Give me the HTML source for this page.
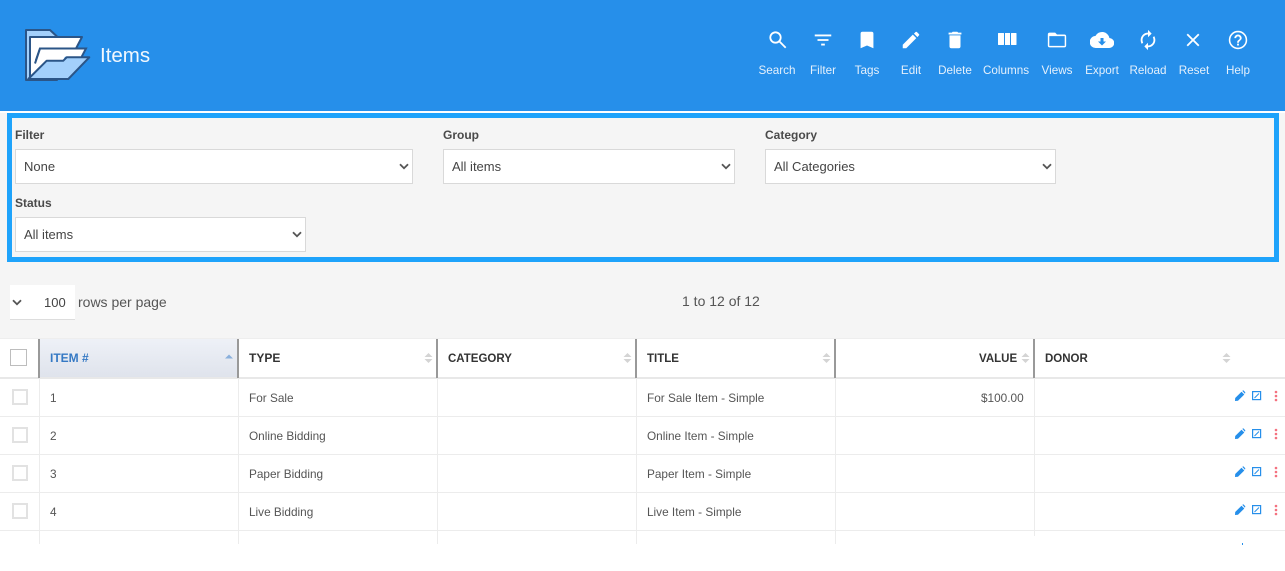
<!DOCTYPE html>
<html><head><meta charset="utf-8">
<style>
html,body{margin:0;padding:0;background:#fff}
#p{position:relative;width:1285px;height:571px;overflow:hidden;background:#fff;font-family:"Liberation Sans",sans-serif;color:#444}
#p div,#p svg{position:absolute}
.t{white-space:nowrap}
.nav{color:#e4f0fc;font-size:11.7px;top:63px;width:60px;text-align:center;line-height:16px}
.lb{font-size:12px;font-weight:bold;color:#4a4a4a;line-height:16px;white-space:nowrap}
.sel{background:#fff;border:1px solid #d9d9d9;box-sizing:border-box;height:35px;font-size:13px;line-height:33px;padding-left:8px;color:#444}
.th{top:351px;font-size:11.5px;font-weight:bold;color:#333;line-height:16px;white-space:nowrap}
.td{font-size:11.8px;color:#555;line-height:16px;white-space:nowrap}
.hl{left:0;width:1285px;height:1px;background:#ececec}
.vl{width:1px;background:#ececec;top:378px;height:166px}
.hd{width:2px;background:#999;top:339px;height:39px}
.cb{left:12px;width:12px;height:12px;border:2px solid #e2e2e2;background:#fff}
</style></head><body><div id="p">
<div style="left:0;top:0;width:1285px;height:111px;background:#268fea"></div>
<div style="left:0;top:113px;width:1285px;height:225px;background:#f5f5f5"></div>

<svg style="left:24px;top:28px" width="68" height="54" viewBox="0 0 68 54">
<path d="M2 2H26L33 8.500V52H2Z" fill="#a3d0fb" stroke="#2b5587" stroke-width="2" stroke-linejoin="round"/>
<path d="M6 9H58L52 20.500H16L11 35L22.700 32.700L6 49Z" fill="#fff" stroke="#2b5587" stroke-width="2" stroke-linejoin="round"/>
<path d="M11 35.500L16 20.500H62L57.700 28.700H41L39 32.700H22.700L14 40L6 49V30H11Z" fill="#fff"/>
<path d="M11 35.500L16 20.500H62L57.700 28.700" fill="none" stroke="#2b5587" stroke-width="2"/>
<path d="M6 9V50" fill="none" stroke="#2b5587" stroke-width="2"/>
<path d="M4.300 51L22.700 32.700H39.300L42.700 29.300H65.300L44.300 51Z" fill="#a3d0fb" stroke="#2b5587" stroke-width="2" stroke-linejoin="round"/>
</svg>
<div class="t" style="left:100px;top:44px;font-size:20.500px;line-height:24px;color:#f2f8fe">Items</div>

<svg style="left:767px;top:29px" width="22" height="22" viewBox="0 0 22 22" fill="none" stroke="#fff" stroke-width="1.800"><circle cx="8.500" cy="8.500" r="5.200"/><path d="M12.500 12.500 18.700 18.700"/></svg>
<svg style="left:812px;top:29px" width="22" height="22" viewBox="0 0 24 24" fill="#fff"><path d="M10 18h4v-2h-4zM3 6v2h18V6zm3 7h12v-2H6z"/></svg>
<svg style="left:856px;top:29px" width="22" height="22" viewBox="0 0 24 24" fill="#fff"><path d="M17 3H7a2 2 0 0 0-2 2v16l7-3 7 3V5a2 2 0 0 0-2-2z"/></svg>
<svg style="left:900px;top:29px" width="22" height="22" viewBox="0 0 24 24" fill="#fff"><path d="M3 17.200V21h3.800L17.800 10 14 6.200zM20.700 7c.4-.4.4-1 0-1.400l-2.300-2.300a1 1 0 0 0-1.400 0l-1.800 1.800 3.800 3.800z"/></svg>
<svg style="left:944px;top:29px" width="22" height="22" viewBox="0 0 24 24" fill="#fff"><path d="M6 19a2 2 0 0 0 2 2h8a2 2 0 0 0 2-2V7H6zM19 4h-3.500l-1-1h-5l-1 1H5v2h14z"/></svg>
<svg style="left:996px;top:29px" width="22" height="22" viewBox="0 0 22 22" fill="#fff"><rect x="2" y="4" width="6" height="12" rx=".5"/><rect x="9" y="4" width="5" height="12"/><rect x="15" y="4" width="5.500" height="12" rx=".5"/></svg>
<svg style="left:1046px;top:29px" width="22" height="22" viewBox="0 0 24 24" fill="#fff" fill-rule="evenodd"><path d="M20 6h-8l-2-2H4a2 2 0 0 0-2 2v12a2 2 0 0 0 2 2h16a2 2 0 0 0 2-2V8a2 2 0 0 0-2-2zM20.400 18.400H3.600V7.800h16.800z"/></svg>
<svg style="left:1090px;top:28px" width="24" height="24" viewBox="0 0 24 24" fill="#fff"><path d="M19.400 10A7.500 7.500 0 0 0 5.400 8 6 6 0 0 0 6 20h13a5 5 0 0 0 .4-10zM16 13.500l-4 4-4-4h2.500V10h3v3.500z"/></svg>
<svg style="left:1137px;top:29px" width="22" height="22" viewBox="0 0 24 24" fill="#fff"><path d="M12 6v3l4-4-4-4v3c-4.420 0-8 3.580-8 8 0 1.570.46 3.030 1.240 4.260L6.700 14.800c-.45-.83-.7-1.790-.7-2.800 0-3.310 2.690-6 6-6zm6.760 1.740L17.300 9.200c.44.84.7 1.790.7 2.800 0 3.310-2.690 6-6 6v-3l-4 4 4 4v-3c4.420 0 8-3.580 8-8 0-1.570-.46-3.030-1.240-4.260z"/></svg>
<svg style="left:1182px;top:29px" width="22" height="22" viewBox="0 0 24 24" fill="#fff"><path d="M19 6.400 17.600 5 12 10.600 6.400 5 5 6.400 10.600 12 5 17.600 6.400 19 12 13.400 17.600 19 19 17.600 13.400 12z"/></svg>
<svg style="left:1227px;top:29px" width="22" height="22" viewBox="0 0 24 24" fill="#fff"><circle cx="12" cy="12" r="9.200" fill="none" stroke="#fff" stroke-width="1.700"/><path d="M11 18h2v-2h-2zm1-12c-2.210 0-4 1.790-4 4h2c0-1.100.9-2 2-2s2 .9 2 2c0 2-3 1.750-3 5h2c0-2.250 3-2.500 3-5 0-2.210-1.790-4-4-4z"/></svg>

<div class="nav" style="left:747px">Search</div>
<div class="nav" style="left:793px">Filter</div>
<div class="nav" style="left:837px">Tags</div>
<div class="nav" style="left:881px">Edit</div>
<div class="nav" style="left:925px">Delete</div>
<div class="nav" style="left:976px">Columns</div>
<div class="nav" style="left:1027px">Views</div>
<div class="nav" style="left:1072px">Export</div>
<div class="nav" style="left:1118px">Reload</div>
<div class="nav" style="left:1164px">Reset</div>
<div class="nav" style="left:1208px">Help</div>

<div style="left:7px;top:113px;width:1272px;height:149px;box-sizing:border-box;border:5px solid #1ea3fb"></div>

<div class="lb" style="left:15px;top:127px">Filter</div>
<div class="lb" style="left:443px;top:127px">Group</div>
<div class="lb" style="left:765px;top:127px">Category</div>
<div class="lb" style="left:15px;top:195px">Status</div>

<div class="sel" style="left:15px;top:149px;width:398px">None</div>
<div class="sel" style="left:443px;top:149px;width:292px">All items</div>
<div class="sel" style="left:765px;top:149px;width:291px">All Categories</div>
<div class="sel" style="left:15px;top:217px;width:291px">All items</div>

<svg style="left:399px;top:163px" width="10" height="7" viewBox="0 0 10 7"><path d="M1 1.200 5 5.200 9 1.200" fill="none" stroke="#555" stroke-width="1.800"/></svg>
<svg style="left:721px;top:163px" width="10" height="7" viewBox="0 0 10 7"><path d="M1 1.200 5 5.200 9 1.200" fill="none" stroke="#555" stroke-width="1.800"/></svg>
<svg style="left:1042px;top:163px" width="10" height="7" viewBox="0 0 10 7"><path d="M1 1.200 5 5.200 9 1.200" fill="none" stroke="#555" stroke-width="1.800"/></svg>
<svg style="left:292px;top:231px" width="10" height="7" viewBox="0 0 10 7"><path d="M1 1.200 5 5.200 9 1.200" fill="none" stroke="#555" stroke-width="1.800"/></svg>

<div style="left:10px;top:285px;width:65px;height:34px;background:#fff;border-bottom:1px solid #ddd"></div>
<svg style="left:12px;top:299px" width="10" height="7" viewBox="0 0 10 7"><path d="M1 1.200 5 5.200 9 1.200" fill="none" stroke="#555" stroke-width="1.800"/></svg>
<div class="t" style="left:44px;top:295px;font-size:13px;line-height:16px;color:#444">100</div>
<div class="t" style="left:78px;top:294px;font-size:14px;line-height:16px;color:#555">rows per page</div>
<div class="t" style="left:682px;top:293px;font-size:14px;line-height:16px;color:#555">1 to 12 of 12</div>

<div style="left:0;top:338px;width:1285px;height:40px;background:#fff"></div>
<div style="left:40px;top:339px;width:198px;height:38px;background:linear-gradient(#eef1f7,#dfe3ec)"></div>
<div class="hl" style="top:338px;background:#eee"></div>
<div class="hl" style="top:377px;height:2px;background:#e8e8e8"></div>
<div class="hd" style="left:38px"></div>
<div class="hd" style="left:237px"></div>
<div class="hd" style="left:436px"></div>
<div class="hd" style="left:635px"></div>
<div class="hd" style="left:834px"></div>
<div class="hd" style="left:1033px"></div>

<div style="left:10px;top:349px;width:15px;height:15px;border:1px solid #bdbdbd;background:#fff"></div>
<div class="th" style="left:50px;top:350px;color:#3579c4;font-size:12px">ITEM #</div>
<div class="th" style="left:249px;top:350px;font-size:12px">TYPE</div>
<div class="th" style="left:448px">CATEGORY</div>
<div class="th" style="left:647px">TITLE</div>
<div class="th" style="left:979px">VALUE</div>
<div class="th" style="left:1045px">DONOR</div>

<svg style="left:225px;top:354px" width="8" height="5" viewBox="0 0 8 5"><path d="M0 4.500 4 .5 8 4.500Z" fill="#8ab0dc"/></svg>
<svg style="left:424px;top:352px" width="9" height="12" viewBox="0 0 9 12"><path d="M.5 5 4.500 1 8.500 5ZM.5 7 4.500 11 8.500 7Z" fill="#d4d4d4"/></svg>
<svg style="left:623px;top:352px" width="9" height="12" viewBox="0 0 9 12"><path d="M.5 5 4.500 1 8.500 5ZM.5 7 4.500 11 8.500 7Z" fill="#d4d4d4"/></svg>
<svg style="left:822px;top:352px" width="9" height="12" viewBox="0 0 9 12"><path d="M.5 5 4.500 1 8.500 5ZM.5 7 4.500 11 8.500 7Z" fill="#d4d4d4"/></svg>
<svg style="left:1021px;top:352px" width="9" height="12" viewBox="0 0 9 12"><path d="M.5 5 4.500 1 8.500 5ZM.5 7 4.500 11 8.500 7Z" fill="#d4d4d4"/></svg>
<svg style="left:1222px;top:352px" width="9" height="12" viewBox="0 0 9 12"><path d="M.5 5 4.500 1 8.500 5ZM.5 7 4.500 11 8.500 7Z" fill="#d4d4d4"/></svg>

<div class="hl" style="top:416px"></div>
<div class="hl" style="top:454px"></div>
<div class="hl" style="top:492px"></div>
<div class="hl" style="top:530px"></div>
<div class="vl" style="left:39px"></div>
<div class="vl" style="left:238px"></div>
<div class="vl" style="left:437px"></div>
<div class="vl" style="left:636px"></div>
<div class="vl" style="left:835px"></div>
<div class="vl" style="left:1034px;height:158px"></div>

<div class="cb" style="top:389px"></div>
<div class="cb" style="top:427px"></div>
<div class="cb" style="top:465px"></div>
<div class="cb" style="top:503px"></div>

<div class="td" style="left:50px;top:390px">1</div>
<div class="td" style="left:249px;top:390px">For Sale</div>
<div class="td" style="left:647px;top:390px">For Sale Item - Simple</div>
<div class="td" style="left:981px;top:390px">$100.00</div>
<div class="td" style="left:50px;top:428px">2</div>
<div class="td" style="left:249px;top:428px">Online Bidding</div>
<div class="td" style="left:647px;top:428px">Online Item - Simple</div>
<div class="td" style="left:50px;top:466px">3</div>
<div class="td" style="left:249px;top:466px">Paper Bidding</div>
<div class="td" style="left:647px;top:466px">Paper Item - Simple</div>
<div class="td" style="left:50px;top:504px">4</div>
<div class="td" style="left:249px;top:504px">Live Bidding</div>
<div class="td" style="left:647px;top:504px">Live Item - Simple</div>

<svg style="left:1233px;top:389px" width="48" height="14" viewBox="0 0 48 14"><path d="M2 12 2.200 9 8.500 2.700 11.300 5.500 5 11.800ZM9.300 1.900 10.300 1.200 12.300 3.200 12 4.800Z" fill="#268fea"/><rect x="19.600" y="2.600" width="8" height="8" fill="none" stroke="#268fea" stroke-width="1.200"/><path d="M21.500 9 26 4.500" stroke="#268fea" stroke-width="1"/><circle cx="43" cy="3" r="1.300" fill="#f4717f"/><circle cx="43" cy="7" r="1.300" fill="#f4717f"/><circle cx="43" cy="11" r="1.300" fill="#f4717f"/></svg>
<svg style="left:1233px;top:427px" width="48" height="14" viewBox="0 0 48 14"><path d="M2 12 2.200 9 8.500 2.700 11.300 5.500 5 11.800ZM9.300 1.900 10.300 1.200 12.300 3.200 12 4.800Z" fill="#268fea"/><rect x="19.600" y="2.600" width="8" height="8" fill="none" stroke="#268fea" stroke-width="1.200"/><path d="M21.500 9 26 4.500" stroke="#268fea" stroke-width="1"/><circle cx="43" cy="3" r="1.300" fill="#f4717f"/><circle cx="43" cy="7" r="1.300" fill="#f4717f"/><circle cx="43" cy="11" r="1.300" fill="#f4717f"/></svg>
<svg style="left:1233px;top:465px" width="48" height="14" viewBox="0 0 48 14"><path d="M2 12 2.200 9 8.500 2.700 11.300 5.500 5 11.800ZM9.300 1.900 10.300 1.200 12.300 3.200 12 4.800Z" fill="#268fea"/><rect x="19.600" y="2.600" width="8" height="8" fill="none" stroke="#268fea" stroke-width="1.200"/><path d="M21.500 9 26 4.500" stroke="#268fea" stroke-width="1"/><circle cx="43" cy="3" r="1.300" fill="#f4717f"/><circle cx="43" cy="7" r="1.300" fill="#f4717f"/><circle cx="43" cy="11" r="1.300" fill="#f4717f"/></svg>
<svg style="left:1233px;top:503px" width="48" height="14" viewBox="0 0 48 14"><path d="M2 12 2.200 9 8.500 2.700 11.300 5.500 5 11.800ZM9.300 1.900 10.300 1.200 12.300 3.200 12 4.800Z" fill="#268fea"/><rect x="19.600" y="2.600" width="8" height="8" fill="none" stroke="#268fea" stroke-width="1.200"/><path d="M21.500 9 26 4.500" stroke="#268fea" stroke-width="1"/><circle cx="43" cy="3" r="1.300" fill="#f4717f"/><circle cx="43" cy="7" r="1.300" fill="#f4717f"/><circle cx="43" cy="11" r="1.300" fill="#f4717f"/></svg>
<div style="left:1242px;top:543px;width:1px;height:2px;background:#268fea"></div>
</div></body></html>
